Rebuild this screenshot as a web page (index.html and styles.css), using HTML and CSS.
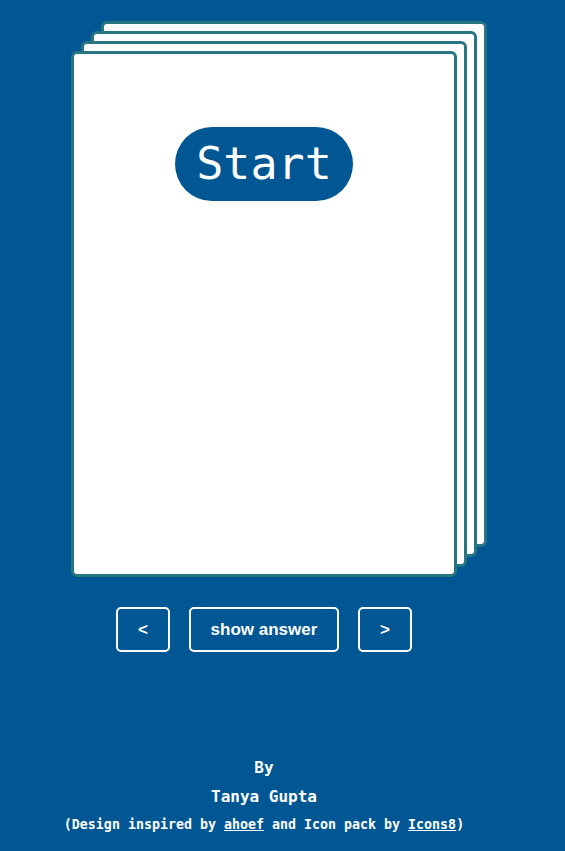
FILE: index.html
```html
<!DOCTYPE html>
<html>
<head>
<meta charset="utf-8">
<link rel="stylesheet" href="styles.css">
</head>
<body>
<div class="page">
  <div class="deck">
    <div class="card">
      <button class="start">Start</button>
    </div>
  </div>
  <div class="controls">
    <button class="ctl ctl-arrow">&lt;</button>
    <button class="ctl ctl-answer">show answer</button>
    <button class="ctl ctl-arrow">&gt;</button>
  </div>
  <footer class="footer">
    <div class="by">By</div>
    <div class="author">Tanya Gupta</div>
    <div class="credit">(Design inspired by <a href="#">ahoef</a> and Icon pack by <a href="#">Icons8</a>)</div>
  </footer>
</div>
</body>
</html>
```
FILE: styles.css
```css
html, body {
  margin: 0;
  padding: 0;
  background: #005794;
  height: 100%;
}
.page {
  width: 528px;
  padding-top: 51px;
  display: flex;
  flex-direction: column;
  align-items: center;
}
.deck {
  width: 386px;
}
.card {
  box-sizing: border-box;
  width: 386px;
  height: 526px;
  background: #fff;
  border: 3px solid #267580;
  border-radius: 6px;
  display: flex;
  flex-direction: column;
  align-items: center;
  box-shadow:
    10px -10px 0 -3px #fff,
    10px -10px 0 0 #267580,
    20px -20px 0 -3px #fff,
    20px -20px 0 0 #267580,
    30px -30px 0 -3px #fff,
    30px -30px 0 0 #267580;
}
.start {
  margin-top: 73px;
  width: 178px;
  height: 74px;
  border: none;
  border-radius: 37px;
  background: #005794;
  color: #fff;
  font-family: "DejaVu Sans Mono", monospace;
  font-size: 45px;
  padding: 0;
  line-height: 74px;
}
.controls {
  margin-top: 30px;
  display: flex;
  gap: 19px;
}
.ctl {
  box-sizing: border-box;
  height: 45px;
  border: 2px solid #fff;
  border-radius: 5px;
  background: transparent;
  color: #fff;
  font-family: "Liberation Sans", Arial, sans-serif;
  font-weight: bold;
  font-size: 17px;
  padding: 0;
}
.ctl-arrow {
  width: 54px;
}
.ctl-answer {
  width: 150px;
}
.footer {
  margin-top: 101px;
  text-align: center;
  color: #fff;
  font-family: "DejaVu Sans Mono", monospace;
  font-weight: bold;
}
.by, .author {
  font-size: 16px;
  line-height: 29px;
}
.credit {
  font-size: 13.3px;
  line-height: 28px;
}
.credit a {
  color: #fff;
  text-decoration: underline;
}
```
